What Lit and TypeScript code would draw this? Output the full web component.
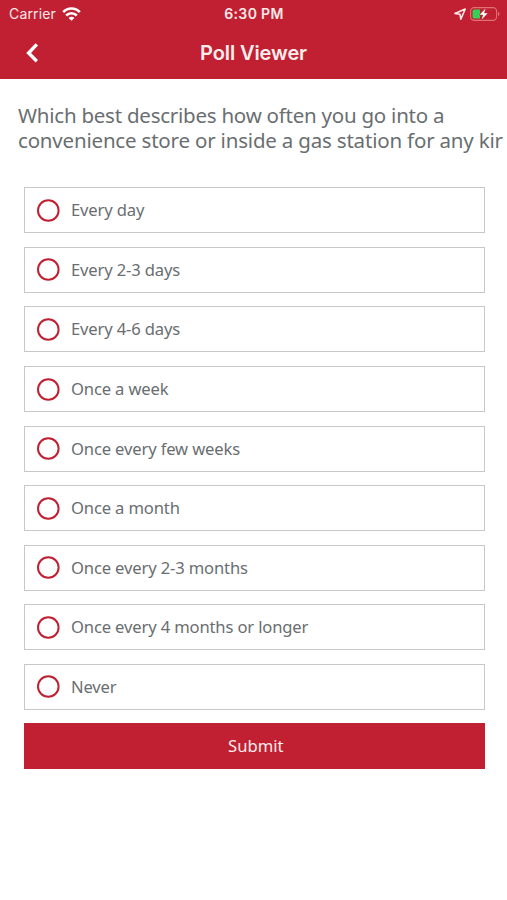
import { LitElement, html, css } from "lit";
import { customElement, property, state } from "lit/decorators.js";

@customElement("status-bar")
class StatusBar extends LitElement {
  static styles = css`
    :host {
      display: grid;
      grid-template-columns: 1fr auto 1fr;
      align-items: center;
      height: 27px;
      padding: 0 7px 0 9px;
      font: 400 14px/17px Inter, sans-serif;
      color: #fde9e8;
    }
    .left, .right { display: flex; align-items: center; }
    .left { gap: 6px; letter-spacing: 0.15px; }
    .right { justify-content: flex-end; gap: 4px; }
    .time { font-weight: 600; font-size: 14px; letter-spacing: 0.35px; margin-right: 1px; }
    svg { display: block; }
  `;
  render() {
    return html`
      <div class="left">
        <span>Carrier</span>
        <svg width="19" height="14" viewBox="0 0 19 14" fill="none" stroke="#fff" stroke-width="2.7">
          <path d="M1.2 5.1C5.8.3 13.2.3 17.8 5.1" />
          <path d="M4.2 8.5C7.2 5.5 11.8 5.5 14.8 8.5" />
          <path d="M9.5 13.8 6.6 10.9C8.2 9.4 10.8 9.4 12.4 10.9Z" fill="#fff" stroke="none" />
        </svg>
      </div>
      <span class="time">6:30 PM</span>
      <div class="right">
        <svg width="12" height="12" viewBox="0 0 12 12" fill="none" stroke="#fde9e8" stroke-width="1.6" stroke-linejoin="round">
          <path d="M1 5.4 11.2 1 6.8 11.2 6 6.2Z" />
        </svg>
        <svg width="30" height="14" viewBox="0 0 30 14">
          <rect x=".6" y=".6" width="26" height="12.8" rx="3.6" fill="none" stroke="#e06f76" stroke-width="1.1" />
          <path d="M4.5 2.4H10V11.6H4.5Q2.6 11.6 2.6 9.7V4.3Q2.6 2.4 4.5 2.4Z" fill="#34d058" />
          <path d="M15.6 1.6 9.6 7.8H13.1L11.6 12.6 17.7 6.2H14.1Z" fill="#fff" stroke="#c12033" stroke-width="1" paint-order="stroke" />
          <path d="M28 4.8Q31 7 28 9.2Z" fill="#e06f76" />
        </svg>
      </div>
    `;
  }
}

@customElement("nav-bar")
class NavBar extends LitElement {
  @property() heading = "";
  static styles = css`
    :host {
      display: grid;
      grid-template-columns: 48px 1fr 48px;
      align-items: center;
      height: 52px;
    }
    .back { display: block; margin-left: 25px; }
    .heading {
      text-align: center;
      font: 600 20px/24px Inter, sans-serif;
      letter-spacing: -0.1px;
      color: #fdeeed;
    }
  `;
  render() {
    return html`
      <svg class="back" width="15" height="20" viewBox="0 0 15 20" fill="none" stroke="#fff" stroke-width="3.4">
        <path d="M11.8 1.4 3.6 10 11.8 18.2" />
      </svg>
      <div class="heading">${this.heading}</div>
    `;
  }
}

@customElement("poll-option")
class PollOption extends LitElement {
  @property() label = "";
  @property({ type: Boolean }) checked = false;
  static styles = css`
    :host {
      display: flex;
      align-items: center;
      box-sizing: border-box;
      height: 46px;
      padding-left: 12px;
      gap: 11px;
      border: 1.5px solid #c8c8c8;
      background: #fff;
      cursor: pointer;
    }
    .radio { display: block; }
    .label { font-size: 16.6px; letter-spacing: -0.15px; line-height: 22px; color: #6a6e71; white-space: nowrap; }
  `;
  render() {
    return html`
      <svg class="radio" width="23" height="23" viewBox="0 0 23 23">
        <circle cx="11.3" cy="11.5" r="10.3" fill="none" stroke="#c12033" stroke-width="2" />
        <circle cx="11.3" cy="11.5" r=${this.checked ? 5.5 : 0} fill="#c12033" />
      </svg>
      <span class="label">${this.label}</span>
    `;
  }
}

@customElement("app-root")
class AppRoot extends LitElement {
  @state() private selected = -1;

  private options = [
    "Every day",
    "Every 2-3 days",
    "Every 4-6 days",
    "Once a week",
    "Once every few weeks",
    "Once a month",
    "Once every 2-3 months",
    "Once every 4 months or longer",
    "Never",
  ];

  static styles = css`
    :host {
      display: block;
      height: 900px;
      overflow: hidden;
      background: #fff;
      font-family: "Noto Sans", sans-serif;
    }
    header { height: 79px; background: #c12033; }
    .question {
      height: 50px;
      margin: 24px 0 34.4px 18px;
      font-size: 20.5px;
      letter-spacing: -0.24px;
      line-height: 25px;
      color: #6a6e71;
      white-space: nowrap;
    }
    .second { letter-spacing: -0.19px; }
    .poll {
      display: grid;
      row-gap: 13.56px;
      margin: 0 22.5px 0 24px;
    }
    .submit {
      height: 46px;
      padding: 0 0 0 3px;
      border: 0;
      background: #c12033;
      color: #fdeeed;
      font: 400 16.6px/22px "Noto Sans", sans-serif;
    }
  `;

  render() {
    return html`
      <header>
        <status-bar></status-bar>
        <nav-bar heading="Poll Viewer"></nav-bar>
      </header>
      <div class="question">Which best describes how often you go into a<br /><span class="second">convenience store or inside a gas station for any kir</span></div>
      <div class="poll">
        ${this.options.map(
          (o, i) => html`<poll-option
            .label=${o}
            .checked=${this.selected === i}
            @click=${() => (this.selected = i)}
          ></poll-option>`
        )}
        <button class="submit">Submit</button>
      </div>
    `;
  }
}
